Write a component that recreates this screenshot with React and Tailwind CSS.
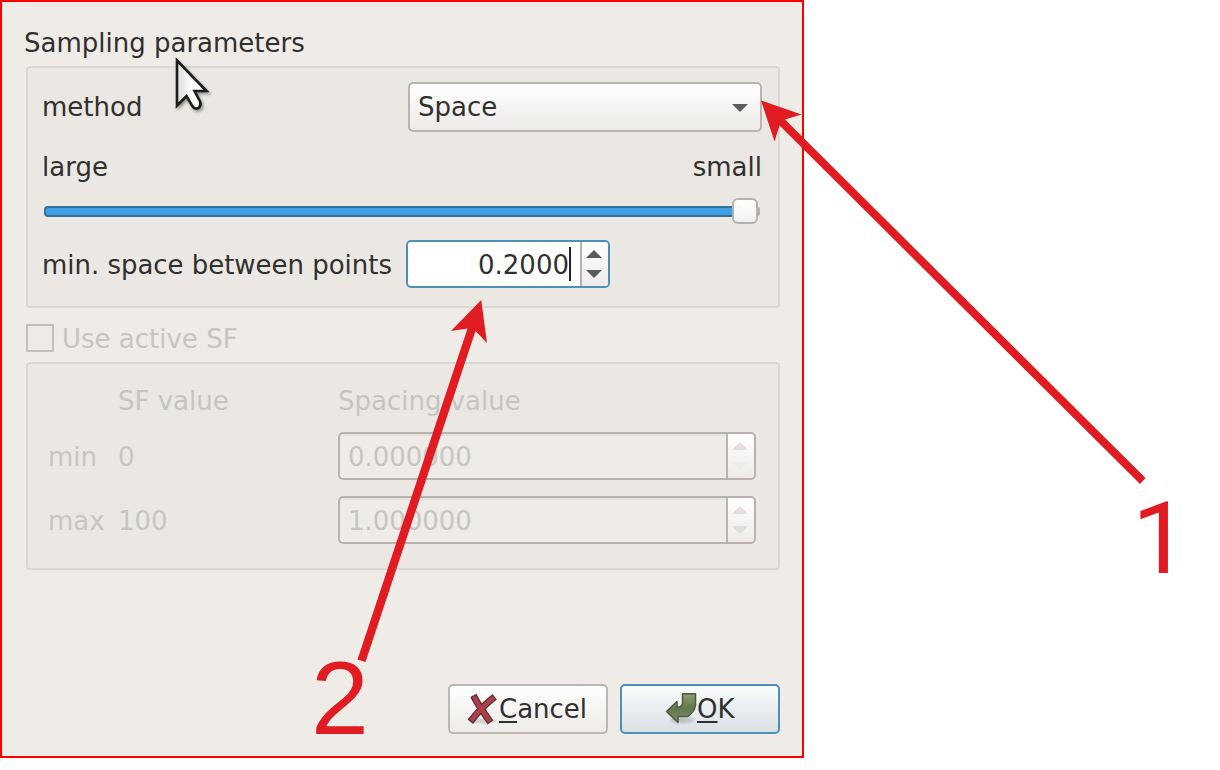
import React from "react";

function Label({ children, className = "" }) {
  return <span className={"block whitespace-pre leading-[30px] " + className}>{children}</span>;
}

function Triangle({ up, className }) {
  return (
    <svg width="16" height="8" viewBox="0 0 16 8" className={className}>
      <path d={up ? "M0 8 8 0 16 8Z" : "M0 0H16L8 8Z"} fill="currentColor" />
    </svg>
  );
}

function DisabledSpin({ value, downClass }) {
  return (
    <div className="flex h-12 w-[418px] overflow-hidden rounded-[5px] border-2 border-[#b7b2ad] bg-[#efebe6] shadow-[inset_0_2px_1px_#e4e0dc]">
      <Label className="flex-1 pl-2 pt-[8px] tracking-[-0.04px]">{value}</Label>
      <div className="flex w-[28px] flex-col items-center border-l-2 border-[#b7b2ad] bg-linear-to-b from-white to-[#eeebe9] pr-0.5 pt-[8px]">
        <Triangle up className="text-[#e2e1e0]" />
        <Triangle className={"mt-[12px] " + downClass} />
      </div>
    </div>
  );
}

function CancelIcon() {
  return (
    <svg width="32" height="32" viewBox="0 0 32 32" className="shrink-0">
      <ellipse cx="17" cy="28" rx="12" ry="2.5" fill="#000" opacity=".12" />
      <g fill="none" strokeLinecap="square">
        <path d="M8 5.500Q12 13 21.500 26.500M25 6Q15 14 5.500 26" stroke="#64323a" strokeWidth="7" />
        <path d="M8 5.500Q12 13 21.500 26.500M25 6Q15 14 5.500 26" stroke="#ac414b" strokeWidth="4.200" />
      </g>
    </svg>
  );
}

function OkIcon() {
  return (
    <svg width="32" height="32" viewBox="0 0 32 32" className="shrink-0">
      <defs>
        <linearGradient id="okFill" x1="0" y1="0" x2="0" y2="1">
          <stop offset="0" stopColor="#8b9d73" />
          <stop offset="0.5" stopColor="#64784e" />
          <stop offset="1" stopColor="#7d9165" />
        </linearGradient>
        <filter id="okShadow" x="-20%" y="-60%" width="140%" height="220%">
          <feGaussianBlur stdDeviation="1.500" />
        </filter>
      </defs>
      <ellipse cx="17" cy="27" rx="12" ry="3" fill="#000" opacity=".18" filter="url(#okShadow)" />
      <path
        d="M17.500 .8H30.500V12.500Q29.500 18.500 23 23.500H13V29.500L1.500 18.500 12 8.500V14.500Q17.500 14 17.500 10Z"
        fill="url(#okFill)"
        stroke="#4c5a40"
        strokeWidth="1.500"
        strokeLinejoin="round"
      />
    </svg>
  );
}

function Annotations() {
  return (
    <>
      <svg width="1220" height="770" className="pointer-events-none absolute left-0 top-0">
        <defs>
          <linearGradient id="cursorFill" x1="0" y1="0" x2="1" y2="0">
            <stop offset="0" stopColor="#dcdcdc" />
            <stop offset="0.5" stopColor="#fff" />
          </linearGradient>
          <filter id="cursorShadow" x="-30%" y="-30%" width="170%" height="170%">
            <feDropShadow dx="1.500" dy="2" stdDeviation="1.500" floodOpacity=".4" />
          </filter>
        </defs>
        <path
          d="M177 60.500V105.500L186.500 96 192 105.500Q195.500 110.500 199 107.500 201.500 105 200 101.500L194.500 91H206.500Z"
          fill="url(#cursorFill)"
          stroke="#1c1c1c"
          strokeWidth="2.600"
          filter="url(#cursorShadow)"
        />
        <g fill="#e01b22">
          <path d="M761 100.500 801.500 114.500 785 119.500 1145.500 478 1140 484 779.500 125.500 774.500 141.500Z" />
          <path d="M481.200 300 487 343 475.500 331 365.500 662 357.500 659.500 467.500 328.500 451 331Z" />
        </g>
      </svg>
      <span className="absolute left-[311px] top-[646px] font-['Liberation_Sans',sans-serif] text-[104px] leading-[104px] text-[#e01b22]">2</span>
      <span className="absolute left-[1132px] top-[487px] font-['Roboto',sans-serif] text-[101px] leading-[104px] text-[#e01b22]">1</span>
    </>
  );
}

export default function App() {
  return (
    <div className="relative h-[770px] w-[1220px] overflow-hidden bg-white font-['DejaVu_Sans',sans-serif] text-[26px] text-[#303030]">
      <main className="flex h-[758px] w-[804px] flex-col border-2 border-[#ff0000] bg-[#efebe6] pl-6 pr-[22px] pt-[26px]">
        <Label className="-ml-0.5">Sampling parameters</Label>
        <section className="mt-2 flex h-[242px] flex-col rounded-[4px] border-2 border-[#dad7d3] bg-[#ebe8e3] pl-3.5 pr-4 pt-3.5">
          <div className="flex h-[50px] items-center justify-between">
            <Label>method</Label>
            <div className="flex h-[50px] w-[354px] items-center justify-between rounded-[5px] border-2 border-[#b9b4af] bg-linear-to-b from-white to-[#edeae8] pl-2 pr-3">
              <Label>Space</Label>
              <Triangle className="mt-0.5 text-[#5b5b5b]" />
            </div>
          </div>
          <div className="mt-5 flex justify-between">
            <Label>large</Label>
            <Label>small</Label>
          </div>
          <div className="mt-4 flex h-[26px] items-center pl-0.5">
            <div className="h-[11px] w-[688px] rounded-l-[4px] border-2 border-r-0 border-[#31729d] bg-[#3fa0e2]" />
            <div className="h-[26px] w-[26px] rounded-[6px] border-2 border-[#b6b1ad] bg-linear-to-b from-white to-[#f3f1ef]" />
            <div className="h-[9px] w-[2px] rounded-r-[2px] bg-[#b6b1ad]" />
          </div>
          <div className="mt-4 flex items-center justify-between pr-[152px]">
            <Label className="pt-0.5 tracking-[-0.03px]">min. space between points</Label>
            <div className="flex h-12 w-[204px] overflow-hidden rounded-[5px] border-2 border-[#4d90b8] bg-white">
              <div className="flex flex-1 items-center justify-end pr-[9px]">
                <Label className="pt-0.5">0.2000</Label>
                <span className="h-[34px] w-[2px] bg-[#222]" />
              </div>
              <div className="flex w-[28px] flex-col items-center border-l-2 border-[#b7b2ad] bg-linear-to-b from-white to-[#eeebe9] pr-0.5 pt-[8px] text-[#5b5b5b]">
                <Triangle up />
                <Triangle className="mt-[12px]" />
              </div>
            </div>
          </div>
        </section>
        <div className="mt-4 flex h-[28px] items-center text-[#c6c5c3]">
          <span className="mr-2 h-[28px] w-[28px] border-2 border-[#c3bfba]" />
          <Label className="pt-0.5">Use active SF</Label>
        </div>
        <section className="mt-[10px] h-[208px] rounded-[4px] border-2 border-[#dad7d3] bg-[#ebe8e3] pl-5 pt-[22px] text-[#c6c5c3]">
          <div className="grid grid-cols-[70px_220px_418px] items-center">
            <span />
            <Label>SF value</Label>
            <Label>Spacing value</Label>
          </div>
          <div className="mt-4 grid grid-cols-[70px_220px_418px] items-center gap-y-4">
            <Label className="pt-0.5">min</Label>
            <Label className="pt-0.5">0</Label>
            <DisabledSpin value="0.000000" downClass="text-[#eeeceb]" />
            <Label className="pt-0.5">max</Label>
            <Label className="pt-0.5">100</Label>
            <DisabledSpin value="1.000000" downClass="text-[#dfdddb]" />
          </div>
        </section>
        <div className="mt-[114px] flex justify-end gap-3">
          <button className="flex h-[50px] w-[160px] items-center rounded-[5px] border-2 border-[#bcb7b2] bg-linear-to-b from-white to-[#eeebe8] pl-[17px]">
            <CancelIcon />
            <Label>
              <span className="underline decoration-2 underline-offset-[3px]">C</span>ancel
            </Label>
          </button>
          <button className="flex h-[50px] w-[160px] items-center rounded-[5px] border-2 border-[#4d90b8] bg-linear-to-b from-[#fbfcfc] to-[#d9e0e5] pl-[43px]">
            <OkIcon />
            <Label>
              <span className="underline decoration-2 underline-offset-[3px]">O</span>K
            </Label>
          </button>
        </div>
      </main>
      <Annotations />
    </div>
  );
}
